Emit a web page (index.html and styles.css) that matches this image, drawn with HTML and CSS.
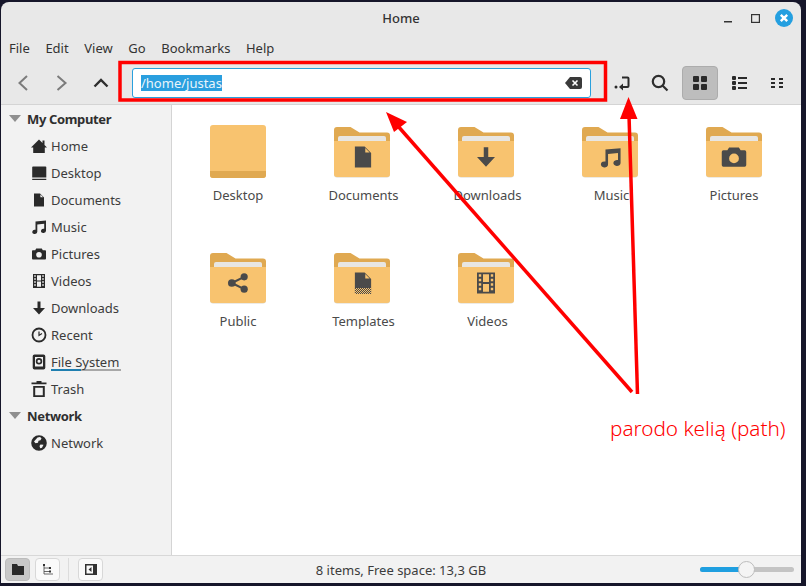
FILE: index.html
```html
<!DOCTYPE html>
<html lang="en">

<head>
    <meta charset="UTF-8">
    <meta name="viewport" content="width=device-width, initial-scale=1.0">
    <title>Home</title>
    <link rel="stylesheet" href="styles.css">
</head>

<body>

    <!-- Shared icons -->
    <svg class="icon-defs" width="0" height="0">
        <defs>
            <pattern id="dither" width="2" height="2" patternUnits="userSpaceOnUse">
                <rect width="1" height="1" fill="#4a4a4a" />
                <rect x="1" y="1" width="1" height="1" fill="#4a4a4a" />
            </pattern>
        </defs>
        <symbol id="i-home" viewBox="0 0 16 16"><path d="M8 1.500 11.500 5V2.500h2v4.500L16 9.500h-2.200V15H2.200V9.500H0z" /></symbol>
        <symbol id="i-desktop" viewBox="0 0 16 16"><path d="M2 1.500h12.500a.8.8 0 0 1 .8.8v10.200H1.200V2.300a.8.8 0 0 1 .8-.8zM1.200 13.800h14.100V15H1.200z" /></symbol>
        <symbol id="i-doc" viewBox="0 0 16 16"><path d="M3 1.500h6l4 4V14.500H3zM9.400 2.500v2.700h2.700z" fill-rule="evenodd" /></symbol>
        <symbol id="i-music" viewBox="0 0 16 16"><path d="M4.500 2.500 15 1.500v10.300a2.500 2.100 0 1 1-1.800-2V4.800L6.300 5.500v7.300a2.500 2.100 0 1 1-1.800-2z" /></symbol>
        <symbol id="i-camera" viewBox="0 0 16 16"><path d="M5.200 2.500h5.600l1 1.700h2.300a.9.900 0 0 1 .9.900v7.500a.9.900 0 0 1-.9.900H1.900a.9.900 0 0 1-.9-.900V5.100a.9.900 0 0 1 .9-.9h2.300zM8 6a2.800 2.800 0 1 0 0 5.600A2.800 2.800 0 0 0 8 6z" fill-rule="evenodd" /></symbol>
        <symbol id="i-film" viewBox="0 0 16 16"><path d="M2 1h12v14H2zM3.200 2.200v1.600h1.600V2.200zm0 3v1.600h1.600V5.200zm0 3v1.600h1.600V8.200zm0 3v1.600h1.600v-1.600zm8-9v1.600h1.600V2.200zm0 3v1.600h1.600V5.200zm0 3v1.600h1.600V8.200zm0 3v1.600h1.600v-1.600zM6 2.200v5.200h4V2.200zM6 8.600v5.200h4V8.600z" fill-rule="evenodd" /></symbol>
        <symbol id="i-down" viewBox="0 0 16 16"><path d="M6.500 1.500h3V8H14l-6 6.500L2 8h4.500z" /></symbol>
        <symbol id="i-share" viewBox="0 0 16 16"><circle cx="12.500" cy="3.500" r="2.600" /><circle cx="12.500" cy="12.500" r="2.600" /><circle cx="3.500" cy="8" r="2.800" /><path d="M3.500 8l9-4.500M3.500 8l9 4.500" fill="none" stroke="currentColor" stroke-width="1.500" /></symbol>
        <symbol id="folder-base" viewBox="0 0 56 56">
            <path d="M0 5a3 3 0 0 1 3-3h13.500l9 5.500H53a3 3 0 0 1 3 3V30H0z" fill="#e0a951" />
            <rect x="4" y="11" width="48" height="12" rx="2" fill="#e8e6e2" />
            <path d="M0 16H56V49.500a3 3 0 0 1-3 3H3a3 3 0 0 1-3-3z" fill="#dcd6ca" />
            <path d="M0 16H56V49a3 3 0 0 1-3 3H3a3 3 0 0 1-3-3z" fill="#f8c36f" />
        </symbol>
    </svg>

    <div class="window">
        <header class="titlebar">
            <h1>Home</h1>
            <div class="win-controls">
                <svg width="8" height="2"><rect width="8" height="1.500" fill="#333" /></svg>
                <svg width="9" height="9"><rect x=".6" y=".6" width="7.800" height="7.800" fill="none" stroke="#333" stroke-width="1.200" /></svg>
                <svg width="18" height="18"><circle cx="9" cy="9" r="9" fill="#249fe0" /><path d="M5.800 5.800l6.400 6.400M12.200 5.800l-6.400 6.400" stroke="#fff" stroke-width="2.400" /></svg>
            </div>
        </header>

        <nav class="menubar">
            <span>File</span>
            <span>Edit</span>
            <span>View</span>
            <span>Go</span>
            <span>Bookmarks</span>
            <span>Help</span>
        </nav>

        <div class="toolbar">
            <div class="nav-buttons">
                <svg width="38" height="16" viewBox="0 0 38 16"><path d="M22 1 14.500 8 22 15" fill="none" stroke="#7c7c7c" stroke-width="2" /></svg>
                <svg width="38" height="16" viewBox="0 0 38 16"><path d="M14.500 1 22.500 8 14.500 15" fill="none" stroke="#7c7c7c" stroke-width="2" /></svg>
                <svg width="40" height="16" viewBox="0 0 40 16"><path d="M13.500 11.500 20 5l6.500 6.500" fill="none" stroke="#2e2e2e" stroke-width="2.400" /></svg>
            </div>

            <div class="path-entry">
                <span class="path-text">/home/justas</span>
                <svg width="17" height="12" viewBox="0 0 17 12"><path d="M5 0h10a2 2 0 0 1 2 2v8a2 2 0 0 1-2 2H5L0 6z" fill="#3a3a3a" /><path d="M7.500 3.500l5 5M12.500 3.500l-5 5" stroke="#fff" stroke-width="1.600" /></svg>
            </div>

            <div class="tool-buttons">
                <div class="tool-btn">
                    <svg width="16" height="16" viewBox="0 0 16 16" fill="none" stroke="#2a2a2a"><circle cx="2" cy="12" r="1.500" fill="#2a2a2a" stroke="none" /><path d="M8 2.500h5.500a1 1 0 0 1 1 1V11a1 1 0 0 1-1 1H8" stroke-width="2" /><path d="M5 12l4-3.500v7z" fill="#2a2a2a" stroke="none" /></svg>
                </div>
                <div class="tool-btn">
                    <svg width="18" height="18" viewBox="0 0 18 18"><circle cx="7.500" cy="7.500" r="5.700" fill="none" stroke="#2e2e2e" stroke-width="2.200" /><path d="M11.500 11.500 16.500 16.500" stroke="#2e2e2e" stroke-width="2.200" /></svg>
                </div>
                <div class="tool-btn active">
                    <svg width="14" height="14" viewBox="0 0 14 14" fill="#2a2a2a"><rect width="6" height="6" rx="1" /><rect x="8" width="6" height="6" rx="1" /><rect y="8" width="6" height="6" rx="1" /><rect x="8" y="8" width="6" height="6" rx="1" /></svg>
                </div>
                <div class="tool-btn">
                    <svg width="15" height="14" viewBox="0 0 15 14" fill="#2a2a2a"><rect width="4" height="4" rx="1" /><rect y="5" width="4" height="4" rx="1" /><rect y="10" width="4" height="4" rx="1" /><rect x="6" y="1" width="9" height="2" /><rect x="6" y="6" width="9" height="2" /><rect x="6" y="11" width="9" height="2" /></svg>
                </div>
                <div class="tool-btn">
                    <svg width="12" height="10" viewBox="0 0 12 10" fill="#2a2a2a"><rect width="4" height="2" /><rect y="4" width="4" height="2" /><rect y="8" width="4" height="2" /><rect x="8" width="4" height="2" /><rect x="8" y="4" width="4" height="2" /><rect x="8" y="8" width="4" height="2" /></svg>
                </div>
            </div>
        </div>

        <div class="main">
            <aside class="sidebar">
                <div class="side-head"><span class="tri"></span>My Computer</div>
                <div class="side-row"><svg class="side-icon"><use href="#i-home" /></svg>Home</div>
                <div class="side-row"><svg class="side-icon"><use href="#i-desktop" /></svg>Desktop</div>
                <div class="side-row"><svg class="side-icon"><use href="#i-doc" /></svg>Documents</div>
                <div class="side-row"><svg class="side-icon"><use href="#i-music" /></svg>Music</div>
                <div class="side-row"><svg class="side-icon"><use href="#i-camera" /></svg>Pictures</div>
                <div class="side-row"><svg class="side-icon"><use href="#i-film" /></svg>Videos</div>
                <div class="side-row"><svg class="side-icon"><use href="#i-down" /></svg>Downloads</div>
                <div class="side-row">
                    <svg class="side-icon" viewBox="0 0 16 16"><circle cx="8" cy="8" r="6.500" fill="none" stroke="currentColor" stroke-width="1.800" /><path d="M8 4.500V8.500L11 6.500" fill="none" stroke="currentColor" stroke-width="1.200" /></svg>Recent
                </div>
                <div class="side-row">
                    <svg class="side-icon" viewBox="0 0 16 16"><path d="M3.500 .5h9A1.800 1.800 0 0 1 14.300 2.300v11.400a1.800 1.800 0 0 1-1.800 1.800h-9a1.800 1.800 0 0 1-1.800-1.800V2.300A1.800 1.800 0 0 1 3.500 .5zM4 3v9.500h8V3z" fill-rule="evenodd" /><circle cx="8" cy="7.300" r="2.400" fill="none" stroke="currentColor" stroke-width="1.700" /></svg>
                    <span class="fs-label">File System</span>
                </div>
                <div class="side-row">
                    <svg class="side-icon" viewBox="0 0 16 16"><path d="M5.500 0h5V1.500H15.500V3.200H.5V1.500h5zM2.200 5h11.600v11H2.200zM4.200 6.800v7.400h7.600V6.800z" fill-rule="evenodd" /></svg>Trash
                </div>
                <div class="side-head"><span class="tri"></span>Network</div>
                <div class="side-row">
                    <svg class="side-icon" viewBox="0 0 16 16"><path d="M8 .2a7.800 7.800 0 1 0 0 15.600A7.800 7.800 0 0 0 8 .2zM6.500 2.500 9 2l1.500 1.200-1 2-2 .5-.5 2-2.500.5L3 6.500zM9.500 9.500l3 .3-1.500 3-1.800.5-.7-2.300z" fill-rule="evenodd" /></svg>Network
                </div>
            </aside>

            <section class="files">
                <div class="file">
                    <svg width="56" height="56" viewBox="0 0 56 56"><rect width="56" height="53" rx="3" fill="#f8c36f" /><path d="M0 46h56v4a3 3 0 0 1-3 3H3a3 3 0 0 1-3-3z" fill="#e0a951" /></svg>
                    <span>Desktop</span>
                </div>
                <div class="file">
                    <svg width="56" height="56" viewBox="0 0 56 56"><use href="#folder-base" /><use href="#i-doc" x="16" y="19" width="26" height="26" /></svg>
                    <span>Documents</span>
                </div>
                <div class="file">
                    <svg width="56" height="56" viewBox="0 0 56 56"><use href="#folder-base" /><use href="#i-down" x="16" y="20" width="24" height="24" /></svg>
                    <span>Downloads</span>
                </div>
                <div class="file">
                    <svg width="56" height="56" viewBox="0 0 56 56"><use href="#folder-base" /><use href="#i-music" x="17" y="21" width="23" height="23" /></svg>
                    <span>Music</span>
                </div>
                <div class="file">
                    <svg width="56" height="56" viewBox="0 0 56 56"><use href="#folder-base" /><use href="#i-camera" x="14" y="18" width="28" height="28" /></svg>
                    <span>Pictures</span>
                </div>
                <div class="file">
                    <svg width="56" height="56" viewBox="0 0 56 56"><use href="#folder-base" /><use href="#i-share" x="17" y="21" width="22" height="22" /></svg>
                    <span>Public</span>
                </div>
                <div class="file">
                    <svg width="56" height="56" viewBox="0 0 56 56"><use href="#folder-base" /><use href="#i-doc" x="16" y="19" width="26" height="26" /><rect x="21" y="37" width="16" height="6" fill="#f8c36f" /><rect x="21" y="37" width="16" height="6" fill="url(#dither)" /></svg>
                    <span>Templates</span>
                </div>
                <div class="file">
                    <svg width="56" height="56" viewBox="0 0 56 56"><use href="#folder-base" /><use href="#i-film" x="16" y="20" width="24" height="24" /></svg>
                    <span>Videos</span>
                </div>
            </section>
        </div>

        <footer class="statusbar">
            <div class="status-left">
                <div class="status-btn active">
                    <svg width="12" height="11" viewBox="0 0 12 11" fill="#2a2a2a"><path d="M0 0h5l1 2h6v9H0z" /></svg>
                </div>
                <div class="status-btn">
                    <svg width="11" height="11" viewBox="0 0 11 11" fill="none" stroke="#444" stroke-width=".8"><path d="M2 0v10h9M2 4h6M2 7.500h6" /><rect x="1" width="2" height="2" fill="#333" stroke="none" /><rect x="7" y="3" width="2" height="2" fill="#333" stroke="none" /><rect x="7" y="6.500" width="2" height="2" fill="#333" stroke="none" /></svg>
                </div>
                <span class="status-sep"></span>
                <div class="status-btn">
                    <svg width="12" height="11" viewBox="0 0 12 11"><rect x=".75" y=".75" width="10.500" height="9.500" fill="#fafafa" stroke="#333" stroke-width="1.500" /><rect x="8" y="1" width="3" height="9" fill="#333" /><path d="M6.500 3 3.500 5.500 6.500 8z" fill="#333" /></svg>
                </div>
            </div>
            <div class="status-text">8 items, Free space: 13,3 GB</div>
            <div class="zoom-slider">
                <div class="zoom-fill"></div>
                <div class="zoom-knob"></div>
            </div>
        </footer>
    </div>

    <!-- Annotation drawn over the screenshot -->
    <svg class="markup" width="806" height="586" viewBox="0 0 806 586">
        <rect x="120" y="62.500" width="485.500" height="37.500" fill="none" stroke="#f00" stroke-width="3.500" />
        <path d="M632 392 397 125" stroke="#f00" stroke-width="3.500" />
        <path d="M386 112 407 122 394 132z" fill="#f00" />
        <path d="M637.500 394 629 115" stroke="#f00" stroke-width="3.500" />
        <path d="M628.500 97 637.500 119 620 119z" fill="#f00" />
    </svg>
    <div class="markup-label">parodo kelią (path)</div>

</body>

</html>
```
FILE: styles.css
```css
/* General Reset */
* {
    margin: 0;
    padding: 0;
    box-sizing: border-box;
}

body {
    width: 806px;
    height: 586px;
    overflow: hidden;
    padding: 2px 5px 3px 1px;
    position: relative;
    background: #16162a;
    color: #3c3c3c;
    font-family: 'Noto Sans', sans-serif;
    font-size: 13px;
}

.icon-defs {
    position: absolute;
}

.window {
    height: 581px;
    display: flex;
    flex-direction: column;
    background: #e8e8e8;
    border-radius: 8px 8px 0 0;
    overflow: hidden;
}

/* Title and menu */
.titlebar {
    height: 32px;
    flex: none;
    display: flex;
    align-items: center;
    justify-content: center;
    position: relative;
}

.titlebar h1 {
    font-size: 13px;
    font-weight: 500;
    color: #333;
}

.win-controls {
    position: absolute;
    right: 8px;
    top: 7px;
    display: flex;
    align-items: center;
    gap: 15px;
}

.win-controls svg:first-child {
    margin-right: 4px;
    margin-top: 8px;
}

.menubar {
    height: 26px;
    flex: none;
    display: flex;
    align-items: center;
    gap: 15.6px;
    padding: 2px 0 0 8px;
    color: #333;
}

/* Toolbar */
.toolbar {
    height: 45px;
    flex: none;
    display: flex;
    align-items: center;
    padding-top: 2px;
    border-bottom: 1px solid #d4d4d4;
}

.nav-buttons {
    width: 131px;
    flex: none;
    display: flex;
    align-items: center;
    padding-left: 4px;
}

.path-entry {
    width: 459px;
    height: 30px;
    flex: none;
    display: flex;
    align-items: center;
    justify-content: space-between;
    padding: 0 8px;
    background: #fff;
    border: 1px solid #29a0dd;
    border-radius: 3px;
}

.path-text {
    background: #2a9fdf;
    color: #e9f5fb;
    line-height: 16px;
}

.tool-buttons {
    display: flex;
    align-items: center;
    margin-left: 12px;
}

.tool-btn {
    width: 38px;
    height: 34px;
    display: flex;
    align-items: center;
    justify-content: center;
}

.tool-btn.active {
    width: 36px;
    margin: 0 2px 0 3px;
    background: #bdbdbd;
    border: 1px solid #acacac;
    border-radius: 4px;
}

/* Sidebar and file grid */
.main {
    flex: 1;
    display: flex;
    min-height: 0;
}

.sidebar {
    width: 171px;
    flex: none;
    background: #f2f2f2;
    border-right: 1px solid #d4d4d4;
}

.side-head,
.side-row {
    height: 27px;
    display: flex;
    align-items: center;
}

.side-head {
    padding-left: 8px;
    font-weight: 700;
    letter-spacing: -0.35px;
    color: #2f2f2f;
}

.side-row {
    padding-left: 30px;
}

.tri {
    width: 0;
    height: 0;
    margin-right: 6px;
    border-left: 6px solid transparent;
    border-right: 6px solid transparent;
    border-top: 7px solid #8f8f8f;
}

.side-icon {
    width: 16px;
    height: 16px;
    margin-right: 4px;
    fill: #2a2a2a;
    color: #2a2a2a;
}

.fs-label {
    width: 70px;
    padding: 2px 0;
    line-height: 14px;
    white-space: nowrap;
    background: linear-gradient(to right, #1f7fb0 30px, #a8a8a8 30px) left bottom / 100% 2px no-repeat;
}

.files {
    flex: 1;
    background: #fff;
    display: grid;
    grid-template-columns: repeat(5, 124px);
    grid-auto-rows: 126px;
    align-content: start;
    padding: 20px 0 0 4px;
}

.file {
    display: flex;
    flex-direction: column;
    align-items: center;
    gap: 5px;
    fill: #4a4a4a;
    color: #4a4a4a;
}

.file span {
    color: #4a4a4a;
}

/* middle columns sit a little right of their icons */
.file:nth-child(5n+2) span,
.file:nth-child(5n+3) span,
.file:nth-child(5n+4) span {
    padding-left: 3px;
}

/* Status bar */
.statusbar {
    height: 28px;
    flex: none;
    position: relative;
    display: flex;
    align-items: center;
    justify-content: space-between;
    padding: 0 7px 0 4px;
    background: #f2f2f2;
    border-top: 1px solid #d8d8d8;
}

.status-left {
    display: flex;
    align-items: center;
    gap: 5px;
}

.status-btn {
    width: 25px;
    height: 23px;
    display: flex;
    align-items: center;
    justify-content: center;
    background: #fafafa;
    border: 1px solid #d8d8d8;
    border-radius: 4px;
}

.status-btn.active {
    background: #c8c8c8;
    border-color: #bcbcbc;
}

.status-sep {
    width: 1px;
    height: 23px;
    margin: 0 4px 0 3px;
    background: #dcdcdc;
}

.status-text {
    position: absolute;
    left: 0;
    right: 0;
    text-align: center;
    pointer-events: none;
}

.zoom-slider {
    width: 94px;
    height: 5px;
    position: relative;
    background: #c4c4c4;
    border-radius: 3px;
}

.zoom-fill {
    width: 42px;
    height: 5px;
    background: #1f9fe0;
    border-radius: 3px 0 0 3px;
}

.zoom-knob {
    position: absolute;
    left: 38px;
    top: -6px;
    width: 17px;
    height: 17px;
    background: #f4f4f4;
    border: 1px solid #bdbdbd;
    border-radius: 50%;
}

/* Red annotation */
.markup {
    position: absolute;
    left: 0;
    top: 0;
}

.markup-label {
    position: absolute;
    left: 610px;
    top: 414px;
    color: #f00;
    font-size: 20.7px;
    font-weight: 300;
    white-space: nowrap;
}
```
